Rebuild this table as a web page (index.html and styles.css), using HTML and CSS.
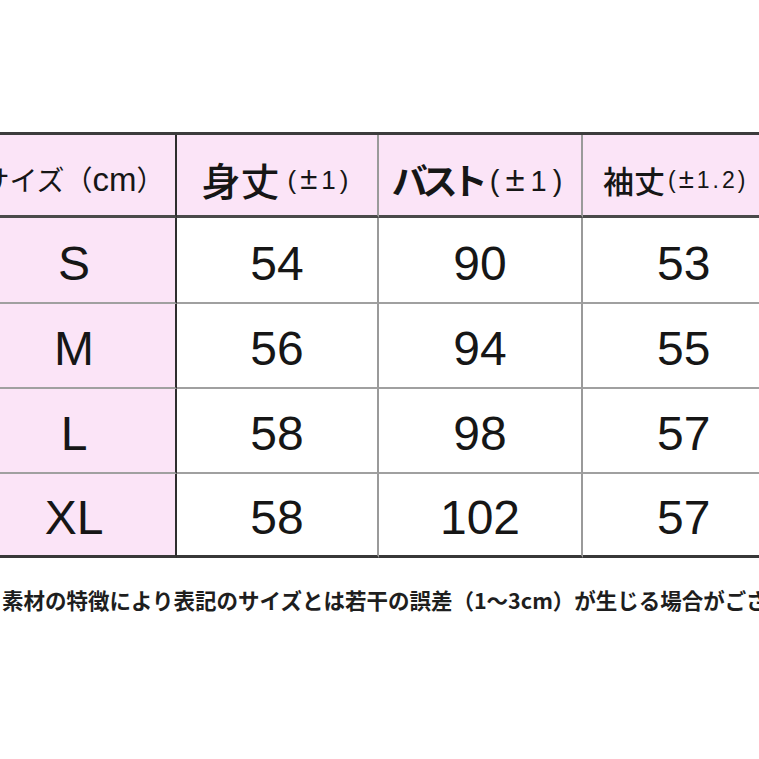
FILE: index.html
```html
<!DOCTYPE html>
<html lang="ja">
<head>
<meta charset="utf-8">
<title>サイズ表</title>
<link rel="stylesheet" href="styles.css">
</head>
<body>
<div class="page">
  <div class="chart">
    <div class="cell head side"><span class="h-size">サイズ（<span class="cm">cm</span>）</span></div>
    <div class="cell head"><span class="h-main">身丈</span><span class="h-tol">(<span class="pm">±</span>1)</span></div>
    <div class="cell head"><span class="h-main h-bust">バスト</span><span class="h-tol h-tol-b">(<span class="pm">±</span>1)</span></div>
    <div class="cell head last"><span class="h-main h-sleeve">袖丈</span><span class="h-tol h-tol-s">(<span class="pm">±</span>1.2)</span></div>

    <div class="cell side r1">S</div>
    <div class="cell r1">54</div>
    <div class="cell r1">90</div>
    <div class="cell last r1">53</div>

    <div class="cell side r2">M</div>
    <div class="cell r2">56</div>
    <div class="cell r2">94</div>
    <div class="cell last r2">55</div>

    <div class="cell side r3">L</div>
    <div class="cell r3">58</div>
    <div class="cell r3">98</div>
    <div class="cell last r3">57</div>

    <div class="cell side r4 end">XL</div>
    <div class="cell r4 end">58</div>
    <div class="cell r4 end">102</div>
    <div class="cell last r4 end">57</div>
  </div>
  <p class="note">素材の特徴により表記のサイズとは若干の誤差（1～3cm）が生じる場合がございます。</p>
</div>
</body>
</html>
```
FILE: styles.css
```css
html, body {
  margin: 0;
  padding: 0;
  background: #ffffff;
  overflow: hidden;
}
body {
  width: 759px;
  height: 759px;
  font-family: "Liberation Sans", "Noto Sans CJK JP", sans-serif;
  color: #161616;
}
.page {
  padding-top: 132px;
  width: 759px;
  overflow: hidden;
}
.chart {
  margin-left: -27px;
  width: 817px;
  display: grid;
  grid-template-columns: 204px 202px 204px 207px;
  grid-template-rows: 83px 86px 85px 85px 84px;
  border-top: 3px solid #3c3c3c;
}
.cell {
  box-sizing: border-box;
  display: flex;
  align-items: center;
  justify-content: center;
  background: #ffffff;
  border-right: 2px solid #9a9a9a;
  border-bottom: 2px solid #a0a0a0;
  font-size: 48px;
  padding-top: 6px;
  white-space: nowrap;
}
.cell.last {
  border-right: none;
  justify-content: flex-start;
  padding-left: 74px;
}
.cell.last.head {
  padding-left: 20px;
}
.cell.side {
  background: #fbe4f7;
  border-right-color: #2e2e2e;
}
.cell.head {
  background: #fbe4f7;
  border-bottom: 3px solid #4a4a4a;
  padding-top: 8px;
  font-family: "Noto Sans CJK JP", sans-serif;
}
.cell.head.side {
  padding-right: 2px;
}
.cell.end {
  border-bottom: 3px solid #383838;
}
.h-size {
  font-size: 28px;
  font-weight: 400;
}
.cm {
  font-family: "Liberation Sans", sans-serif;
  font-size: 33px;
}
.h-main {
  font-size: 39px;
  font-weight: 500;
}
.h-bust {
  font-size: 36px;
  letter-spacing: -6px;
  font-weight: 700;
}
.h-sleeve {
  font-size: 31px;
  font-weight: 500;
}
.h-tol {
  font-family: "Liberation Sans", sans-serif;
  font-size: 26px;
  font-weight: 400;
  letter-spacing: 4px;
  margin-left: 8px;
}
.pm {
  font-size: 1.2em;
}
.h-tol-b {
  font-size: 29px;
  letter-spacing: 6px;
  margin-left: 8px;
}
.h-tol-s {
  font-size: 23px;
  letter-spacing: 3px;
  margin-left: 3px;
}
.note {
  margin: 28px 0 0 2px;
  font-family: "Noto Sans CJK JP", sans-serif;
  font-size: 21.5px;
  font-weight: 700;
  line-height: 28px;
  white-space: nowrap;
  color: #1e1e1e;
}
```
